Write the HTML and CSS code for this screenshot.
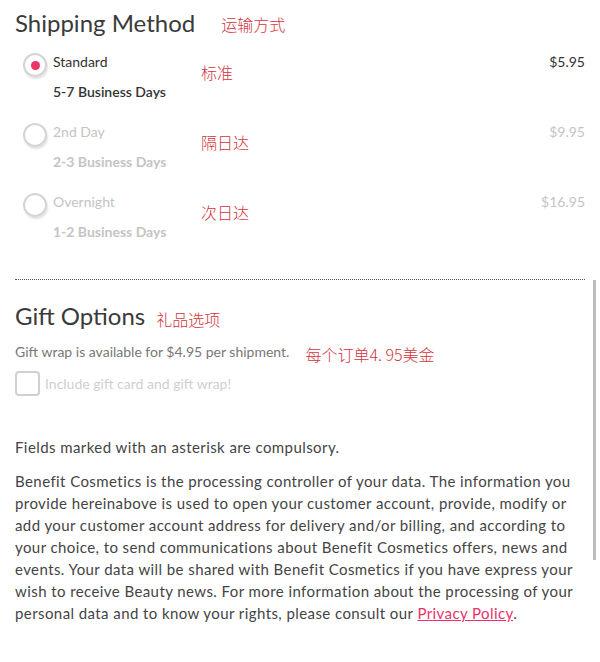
FILE: index.html
```html
<!DOCTYPE html>
<html>
<head>
<meta charset="utf-8">
<link rel="stylesheet" href="styles.css">
</head>
<body>
<div class="page">
  <section class="shipping">
    <div class="title-row">
      <h2 class="title">Shipping Method</h2>
      <span class="note note-title">运输方式</span>
    </div>
    <div class="methods">
      <div class="method active">
        <span class="radio checked"><span class="dot"></span></span>
        <div class="labels">
          <div class="name">Standard</div>
          <div class="days">5-7 Business Days</div>
        </div>
        <span class="note note-method">标准</span>
        <span class="price">$5.95</span>
      </div>
      <div class="method">
        <span class="radio"></span>
        <div class="labels">
          <div class="name">2nd Day</div>
          <div class="days">2-3 Business Days</div>
        </div>
        <span class="note note-method">隔日达</span>
        <span class="price">$9.95</span>
      </div>
      <div class="method">
        <span class="radio"></span>
        <div class="labels">
          <div class="name">Overnight</div>
          <div class="days">1-2 Business Days</div>
        </div>
        <span class="note note-method">次日达</span>
        <span class="price">$16.95</span>
      </div>
    </div>
  </section>
  <hr class="divider">
  <section class="gift">
    <div class="title-row">
      <h2 class="title">Gift Options</h2>
      <span class="note note-gift">礼品选项</span>
    </div>
    <p class="gift-info">Gift wrap is available for $4.95 per shipment.<span class="note note-info">每个订单4. 95美金</span></p>
    <label class="check-row"><span class="checkbox"></span><span class="check-label">Include gift card and gift wrap!</span></label>
  </section>
  <p class="fields">Fields marked with an asterisk are compulsory.</p>
  <p class="legal">Benefit Cosmetics is the processing controller of your data. The information you provide hereinabove is used to open your customer account, provide, modify or add your customer account address for delivery and/or billing, and according to your choice, to send communications about Benefit Cosmetics offers, news and events. Your data will be shared with Benefit Cosmetics if you have express your wish to receive Beauty news. For more information about the processing of your personal data and to know your rights, please consult our <a class="link" href="#">Privacy Policy</a>.</p>
  <div class="scroll-thumb"></div>
</div>
</body>
</html>
```
FILE: styles.css
```css
html, body {
  margin: 0;
  padding: 0;
  background: #fff;
}
body {
  font-family: Lato, "Open Sans", sans-serif;
  color: #444;
}
.page {
  position: relative;
  width: 570px;
  padding: 0 15px;
}
.title-row {
  display: flex;
  align-items: center;
}
.title {
  margin: 0;
  font-weight: 400;
  font-size: 24px;
  color: #3a3a3a;
  line-height: 30px;
}
.note {
  font-family: "Noto Sans CJK SC", sans-serif;
  font-weight: 300;
  color: #d3323b;
  font-size: 16px;
  line-height: 20px;
  letter-spacing: 0;
}
.shipping .title-row {
  padding-top: 8px;
}
.note-title {
  margin-left: 26px;
  margin-top: 2px;
}
.methods {
  padding-top: 16px;
}
.method {
  display: grid;
  grid-template-columns: 38px 148px 1fr auto;
  height: 70px;
  color: #c4c4c4;
}
.method.active {
  color: #333;
}
.radio {
  width: 20px;
  height: 20px;
  margin: -1px 0 0 8px;
  border: 2px solid #d4d4d4;
  border-radius: 50%;
  box-shadow: 1px 2px 2px rgba(0,0,0,0.12);
  display: flex;
  align-items: center;
  justify-content: center;
  box-sizing: content-box;
}
.dot {
  width: 9px;
  height: 9px;
  border-radius: 50%;
  background: #ea3366;
}
.labels {
  font-size: 14px;
  line-height: 16px;
}
.name {
  height: 30px;
}
.days {
  font-weight: 700;
}
.method.active .days {
  font-weight: 600;
  color: #333;
}
.note-method {
  margin-top: 8px;
}
.price {
  font-size: 14px;
  line-height: 16px;
}
.divider {
  margin: 15px 0 0;
  border: 0;
  border-top: 1px dotted #555;
  height: 0;
}
.gift .title-row {
  padding-top: 21px;
}
.note-gift {
  margin-left: 11px;
  margin-top: 6px;
}
.gift-info {
  margin: 9px 0 0;
  font-size: 14px;
  line-height: 16px;
  color: #777;
}
.note-info {
  margin-left: 16px;
  position: relative;
  top: 4px;
}
.check-row {
  display: flex;
  align-items: center;
  margin-top: 11px;
}
.checkbox {
  width: 21px;
  height: 21px;
  border: 2px solid #d0d0d0;
  border-radius: 4px;
}
.check-label {
  margin-left: 5px;
  font-size: 14px;
  color: #cfcfcf;
}
.fields {
  margin: 40px 0 0;
  font-size: 15px;
  line-height: 22px;
  letter-spacing: 0.42px;
  color: #444;
}
.legal {
  margin: 12px 0 0;
  font-size: 15px;
  line-height: 22px;
  letter-spacing: 0.42px;
  color: #444;
}
.link {
  color: #e8336a;
}
.scroll-thumb {
  position: absolute;
  left: 593px;
  top: 280px;
  width: 3px;
  height: 280px;
  background: #bdbdbd;
}
```
